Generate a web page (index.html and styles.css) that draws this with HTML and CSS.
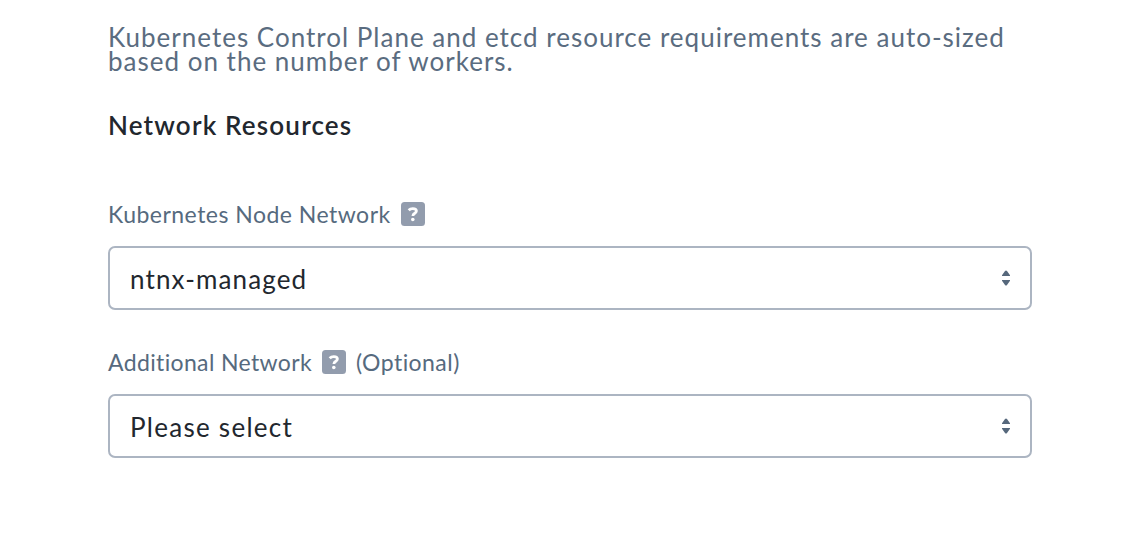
FILE: index.html
```
<!DOCTYPE html>
<html lang="en">
<head>
<meta charset="utf-8">
<title>Network Resources</title>
<link rel="stylesheet" href="styles.css">
</head>
<body>
<main class="form">
  <p class="intro">Kubernetes Control Plane and etcd resource requirements are auto-sized<br>based on the number of workers.</p>
  <h2 class="heading">Network Resources</h2>
  <section class="field">
    <div class="label"><span class="label-node">Kubernetes Node Network</span>
      <svg class="help" viewBox="0 0 24 24"><rect width="24" height="24" rx="3.5" fill="#929cad"/><path d="M7.7 8.3C8.8 7.1 10.2 6.6 11.8 6.6c2.2 0 3.6 1 3.6 2.5 0 2.3-3.5 2-3.5 4.9" fill="none" stroke="#fff" stroke-width="2.8"/><circle cx="11.8" cy="17.5" r="1.8" fill="#fff"/></svg>
    </div>
    <div class="select"><span class="value-node">ntnx-managed</span>
      <svg class="arrows" viewBox="0 0 8 16"><path d="M0 6V5.2L3 1Q4-.2 5 1L8 5.2V6zM0 10h8v.8L5 15Q4 16.2 3 15L0 10.8z" fill="#56687c"/></svg>
    </div>
  </section>
  <section class="field">
    <div class="label"><span class="label-additional">Additional Network</span>
      <svg class="help" viewBox="0 0 24 24"><rect width="24" height="24" rx="3.5" fill="#929cad"/><path d="M7.7 8.3C8.8 7.1 10.2 6.6 11.8 6.6c2.2 0 3.6 1 3.6 2.5 0 2.3-3.5 2-3.5 4.9" fill="none" stroke="#fff" stroke-width="2.8"/><circle cx="11.8" cy="17.5" r="1.8" fill="#fff"/></svg>
      <span class="optional">(Optional)</span>
    </div>
    <div class="select"><span class="value-additional">Please select</span>
      <svg class="arrows" viewBox="0 0 8 16"><path d="M0 6V5.2L3 1Q4-.2 5 1L8 5.2V6zM0 10h8v.8L5 15Q4 16.2 3 15L0 10.8z" fill="#56687c"/></svg>
    </div>
  </section>
</main>
</body>
</html>
```
FILE: styles.css
```
* { box-sizing: border-box; }
body { margin: 0; background: #fff; font-family: Lato, "Open Sans", sans-serif; }
.form { width: 924px; margin-left: 108px; padding-top: 25px; }
.intro { margin: 0; font-size: 26px; line-height: 24px; letter-spacing: 1px; color: #5a6c80; white-space: nowrap; }
.heading { margin: 36px 0 0; font-size: 26px; line-height: 32px; font-weight: 600; letter-spacing: 1.17px; color: #22272e; }
.field { margin-bottom: 36px; }
.heading + .field { margin-top: 57px; }
.label { display: flex; align-items: center; height: 32px; font-size: 23px; line-height: 32px; color: #566a7e; white-space: nowrap; }
.label-node { width: 283px; letter-spacing: 0.48px; }
.label-additional { width: 204px; letter-spacing: 0.36px; }
.help { flex: none; width: 24px; height: 24px; margin-left: 10px; }
.optional { margin-left: 10px; letter-spacing: 0.45px; }
.select { display: flex; align-items: center; justify-content: space-between; height: 64px; margin-top: 16px; padding: 2px 20px 0; border: 2px solid #acb5c2; border-radius: 7px; font-size: 26px; color: #22272e; }
.value-node { letter-spacing: 1.13px; }
.value-additional { letter-spacing: 1.27px; }
.arrows { width: 8px; height: 16px; margin-top: -2px; overflow: visible; }
```
